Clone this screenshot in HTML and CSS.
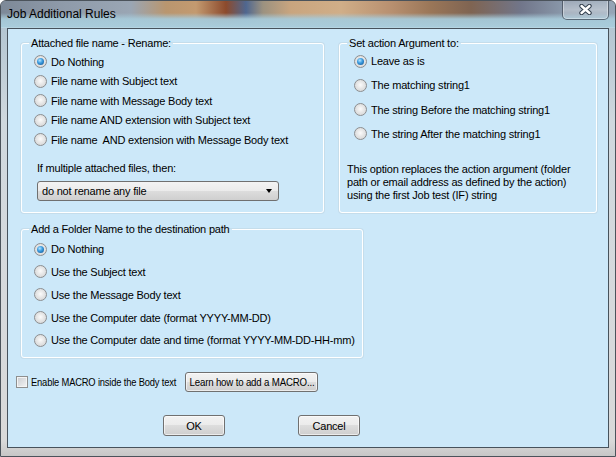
FILE: index.html
```html
<!DOCTYPE html>
<html lang="en">
<head>
    <meta charset="UTF-8">
    <title>Job Additional Rules</title>
    <link rel="stylesheet" href="styles.css">
</head>
<body>
    <div class="window">
        <div class="titlebar">
            <span class="title">Job Additional Rules</span>
            <div class="close">
                <svg width="13" height="11" viewBox="0 0 13 11">
                    <path d="M2.5 2 L10.5 9 M10.5 2 L2.5 9" stroke="#33404e" stroke-width="4.4" stroke-linecap="round"/>
                    <path d="M2.5 2 L10.5 9 M10.5 2 L2.5 9" stroke="#fff" stroke-width="2.4" stroke-linecap="round"/>
                </svg>
            </div>
        </div>

        <div class="client">
            <div class="top-row">
                <fieldset class="group rename">
                    <legend>Attached file name - Rename:</legend>
                    <div class="options tight">
                        <div class="option"><span class="radio checked"></span>Do Nothing</div>
                        <div class="option"><span class="radio"></span>File name with Subject text</div>
                        <div class="option"><span class="radio"></span>File name with Message Body text</div>
                        <div class="option"><span class="radio"></span>File name AND extension with Subject text</div>
                        <div class="option"><span class="radio"></span>File name&nbsp; AND extension with Message Body text</div>
                    </div>
                    <div class="sub-label">If multiple attached files, then:</div>
                    <div class="combo">
                        <span>do not rename any file</span>
                        <span class="arrow"></span>
                    </div>
                </fieldset>

                <fieldset class="group argument">
                    <legend>Set action Argument to:</legend>
                    <div class="options wide">
                        <div class="option"><span class="radio checked"></span>Leave as is</div>
                        <div class="option"><span class="radio"></span>The matching string1</div>
                        <div class="option"><span class="radio"></span>The string Before the matching string1</div>
                        <div class="option"><span class="radio"></span>The string After the matching string1</div>
                    </div>
                    <p class="note">This option replaces the action argument (folder<br>path or email address as defined by the action)<br>using the first Job test (IF) string</p>
                </fieldset>
            </div>

            <fieldset class="group folder">
                <legend>Add a Folder Name to the destination path</legend>
                <div class="options medium">
                    <div class="option"><span class="radio checked"></span>Do Nothing</div>
                    <div class="option"><span class="radio"></span>Use the Subject text</div>
                    <div class="option"><span class="radio"></span>Use the Message Body text</div>
                    <div class="option"><span class="radio"></span>Use the Computer date (format YYYY-MM-DD)</div>
                    <div class="option"><span class="radio"></span>Use the Computer date and time (format YYYY-MM-DD-HH-mm)</div>
                </div>
            </fieldset>

            <div class="macro-row">
                <div class="macro-check"><span class="checkbox"></span><span class="macro-label">Enable MACRO inside the Body text</span></div>
                <div class="button learn"><span>Learn how to add a MACRO...</span></div>
            </div>

            <div class="actions">
                <div class="button ok">OK</div>
                <div class="button cancel">Cancel</div>
            </div>
        </div>
    </div>
</body>
</html>
```

FILE: styles.css
```css
* { box-sizing: border-box; }
body { margin: 0; font-family: 'Liberation Sans', Arial, sans-serif; font-size: 11px; letter-spacing: -0.2px; color: #000; }

.window {
    width: 616px;
    height: 457px;
    display: flex;
    flex-direction: column;
    border: 1px solid #4b535b;
    border-radius: 6px 6px 0 0;
    background: linear-gradient(to bottom, #8b98a6 0, #b4c6d2 28px, #cfd8de 120px, #d6d9dc 300px, #d9d9d9 440px, #c4c4c4 457px);
    overflow: hidden;
}

/* title bar, blurred aero glass */
.titlebar {
    height: 27px;
    display: flex;
    align-items: center;
    padding-left: 6px;
    position: relative;
    background:
        linear-gradient(to bottom, rgba(164,199,214,0) 0, rgba(164,199,214,0) 12px, rgba(166,201,216,0.95) 18px, #a9ccdb 26px, #c3dde8 27px),
        linear-gradient(to right, #7d8998 0, #8e9aa9 60px, #9aa6b4 130px, #b9966f 165px, #c39a70 195px, #8c4a2c 225px, #4f6790 245px, #9c9280 262px, #c9a57f 290px, #d0ae88 340px, #b89070 390px, #9a7658 430px, #7f6452 470px, #71768a 520px, #8896a8 560px, #96a6b7 616px);
}
.title { font-size: 12px; letter-spacing: 0; color: #000; padding-bottom: 1px; }

.close {
    position: absolute;
    top: -1px;
    right: 6px;
    width: 47px;
    height: 20px;
    border: 1px solid rgba(50,60,75,0.7);
    border-top: none;
    border-radius: 0 0 5px 5px;
    background: linear-gradient(to bottom, rgba(255,255,255,0.15), rgba(255,255,255,0.35) 50%, rgba(200,215,225,0.25));
    box-shadow: inset 0 0 0 1px rgba(255,255,255,0.35);
    display: flex;
    align-items: center;
    justify-content: center;
}

.client {
    margin: 0 6px;
    height: 420px;
    border: 1px solid #47525c;
    background: #cce8f9;
}

/* group boxes */
.group {
    margin: 0;
    padding: 0;
    border: 1px solid #fff;
    border-radius: 3px;
    box-shadow: 0 0 0 1px rgba(190,210,222,0.5);
    min-width: 0;
}
.group legend {
    margin-left: 7px;
    padding: 0 2px;
    line-height: 13px;
}

.top-row {
    display: flex;
    gap: 15px;
    height: 176px;
    margin-top: 8px;
    padding-left: 13px;
}
.rename { width: 303px; padding-top: 2px; }
.argument { width: 258px; padding-top: 1px; }
.folder { width: 342px; height: 135px; margin: 10px 0 0 13px; padding-top: 3px; }

.options { display: flex; flex-direction: column; margin-left: 12px; }
.option { display: flex; align-items: center; gap: 4px; white-space: nowrap; }
.tight .option { height: 19.5px; }
.wide { margin-left: 14px; gap: 4.3px; }
.wide .option { height: 20px; }
.medium { gap: 2.85px; }
.medium .option { height: 20px; }

.radio {
    flex: none;
    width: 13px;
    height: 13px;
    border-radius: 50%;
    border: 1px solid #8c8e90;
    background: radial-gradient(circle at 50% 45%, #fbfbfb 0, #e6e6e6 45%, #cfd0d1 100%);
    display: flex;
    align-items: center;
    justify-content: center;
}
.radio.checked::after {
    content: '';
    width: 7px;
    height: 7px;
    border-radius: 50%;
    background: radial-gradient(circle at 40% 35%, #b9e6ff 0, #3f9fe2 40%, #0b4c8a 100%);
}

.sub-label { margin: 12px 0 0 15px; line-height: 13px; }

.combo {
    width: 242px;
    height: 20px;
    margin: 6.5px 0 0 15px;
    padding: 0 6px 0 4px;
    border: 1px solid #707070;
    border-radius: 3px;
    background: linear-gradient(to bottom, #f3f3f3 0, #ebebeb 50%, #dddddd 50%, #cfcfcf 100%);
    display: flex;
    align-items: center;
    justify-content: space-between;
}
.arrow {
    width: 0;
    height: 0;
    border-left: 3.5px solid transparent;
    border-right: 3.5px solid transparent;
    border-top: 4px solid #000;
}

.note { margin: 19px 0 0 7px; line-height: 13.3px; white-space: nowrap; }

.checkbox {
    flex: none;
    width: 12px;
    height: 12px;
    border: 1px solid #8e8f8f;
    background: linear-gradient(135deg, #c9ccd1, #f4f4f4);
    box-shadow: inset 0 0 0 1px #f4f4f4;
}

.macro-row {
    display: flex;
    align-items: center;
    height: 20px;
    margin-top: 14px;
    padding-left: 8px;
}
.macro-check {
    flex: none;
    width: 169px;
    display: flex;
    align-items: center;
    gap: 3px;
    white-space: nowrap;
}
.macro-label { display: inline-block; transform: scaleX(0.85); transform-origin: left center; }

.button {
    flex: none;
    height: 21px;
    border: 1px solid #707070;
    border-radius: 3px;
    background: linear-gradient(to bottom, #f2f2f2 0, #ebebeb 50%, #dddddd 50%, #cfcfcf 100%);
    box-shadow: inset 0 0 0 1px rgba(255,255,255,0.6);
    display: flex;
    align-items: center;
    justify-content: center;
    white-space: nowrap;
}
.learn { width: 133px; height: 20px; }
.learn span { display: inline-block; transform: scaleX(0.88); }

.actions {
    display: flex;
    gap: 73px;
    margin-top: 23px;
    padding-left: 155px;
}
.ok, .cancel { width: 62px; }
```
